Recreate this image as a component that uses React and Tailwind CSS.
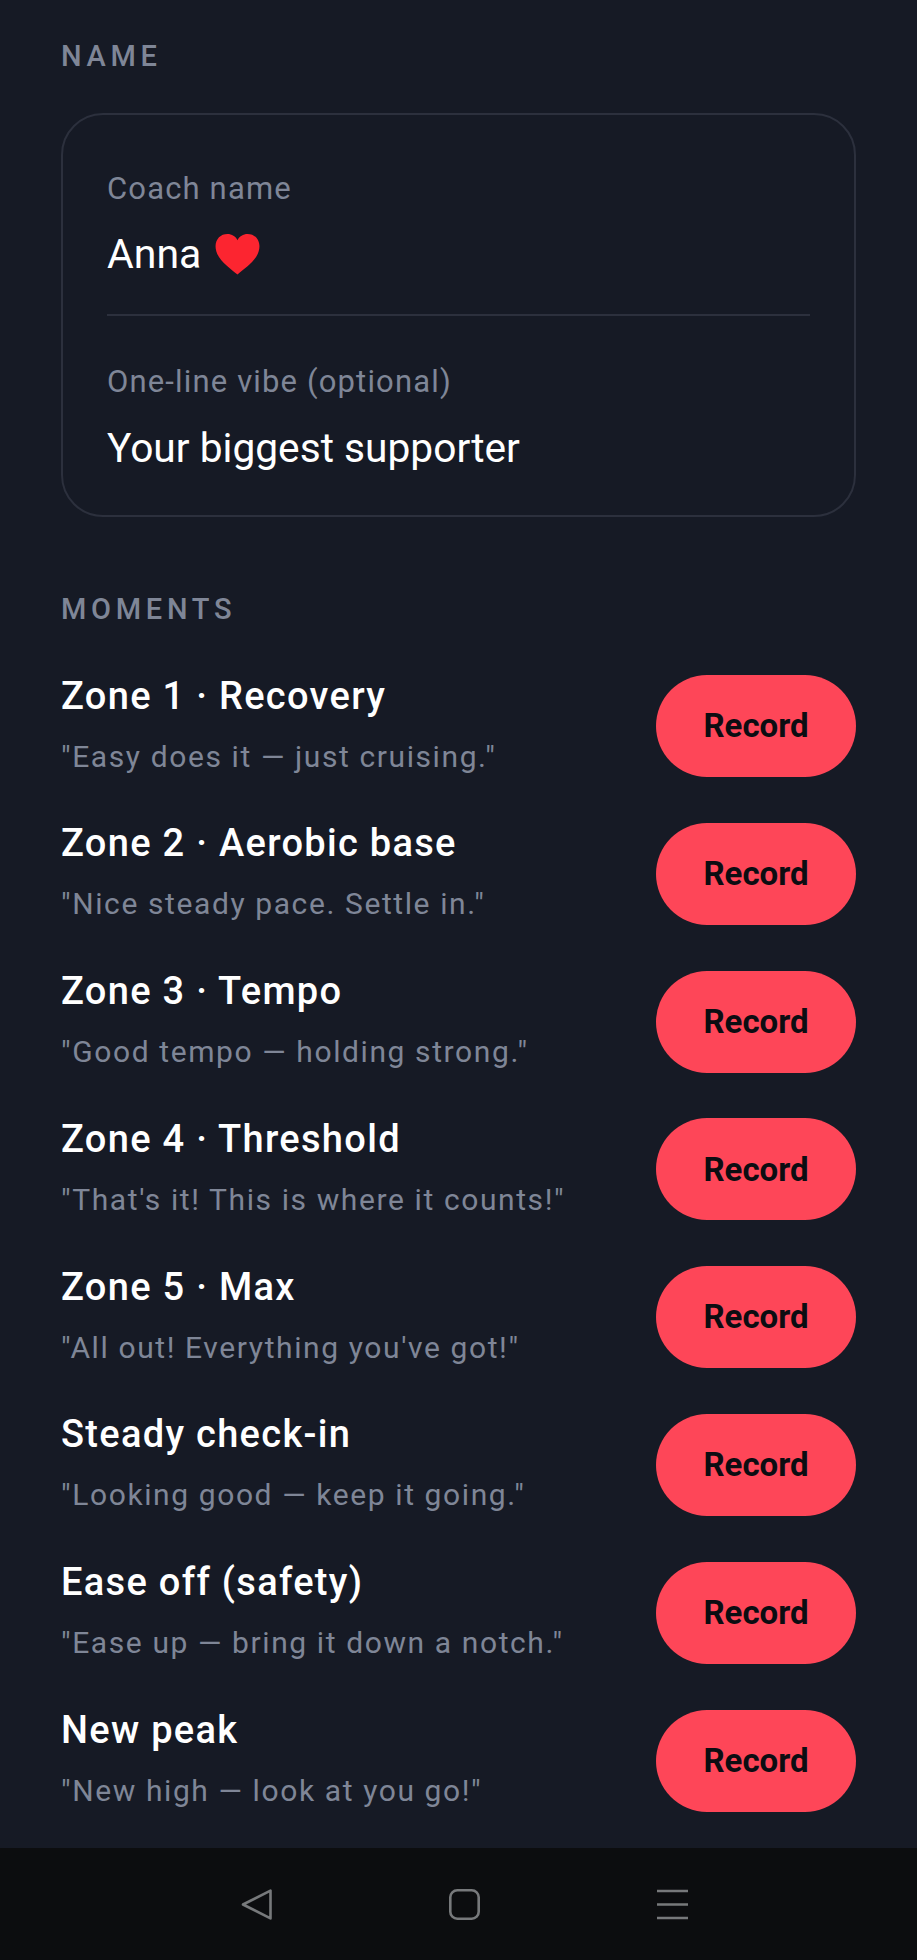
const moments = [
  ["Zone 1 · Recovery", '"Easy does it — just cruising."'],
  ["Zone 2 · Aerobic base", '"Nice steady pace. Settle in."'],
  ["Zone 3 · Tempo", '"Good tempo — holding strong."'],
  ["Zone 4 · Threshold", '"That\'s it! This is where it counts!"'],
  ["Zone 5 · Max", '"All out! Everything you\'ve got!"'],
  ["Steady check-in", '"Looking good — keep it going."'],
  ["Ease off (safety)", '"Ease up — bring it down a notch."'],
  ["New peak", '"New high — look at you go!"'],
];

function Heart() {
  return (
    <svg viewBox="0 0 48 44" className="ml-[13px] h-[42px] w-[47px]">
      <path
        d="M24 43.5C15 36 1 27 1 14C1 6 6.500 1 13.500 1C18 1 22 3.500 24 7.500C26 3.500 30 1 34.500 1C41.500 1 47 6 47 14C47 27 33 36 24 43.500Z"
        fill="#fc2530"
      />
    </svg>
  );
}

function NavBar() {
  return (
    <div className="mt-auto flex h-[112px] items-center justify-between bg-[#0c0d0f] pl-[241px] pr-[229px]">
      <svg width="31" height="31" viewBox="0 0 31 31" fill="none" stroke="#77797b" strokeWidth="2.6" strokeLinejoin="round">
        <path d="M2 15.5L29.5 1.6V29.4Z" />
      </svg>
      <svg width="31" height="31" viewBox="0 0 31 31" fill="none" stroke="#77797b" strokeWidth="2.6">
        <rect x="1.3" y="1.3" width="28.4" height="28.4" rx="7" />
      </svg>
      <svg width="31" height="31" viewBox="0 0 31 31" fill="none" stroke="#77797b" strokeWidth="2.6">
        <path d="M0 2H31M0 15.5H31M0 29H31" />
      </svg>
    </div>
  );
}

export default function App() {
  return (
    <div className="flex h-[1960px] w-[917px] flex-col overflow-hidden bg-[#161a25] font-['Roboto',sans-serif]">
      <div className="px-[61px] pt-[38px]">
        <h2 className="text-[29px] leading-[36px] font-medium tracking-[4.7px] text-[#7f8697]">NAME</h2>

        <div className="mt-[39px] rounded-[42px] border-2 border-[#2c303d] px-[44px] pt-[54px] pb-[42px]">
          <p className="text-[31px] leading-[40px] tracking-[1.15px] text-[#7f8697]">Coach name</p>
          <div className="mt-[20px] flex h-[50px] items-center text-[41px] leading-[50px] text-white">
            Anna
            <Heart />
          </div>
          <div className="mt-[35px] h-[2px] bg-[#2c303d]" />
          <p className="mt-[46px] text-[31px] leading-[40px] tracking-[1.15px] text-[#7f8697]">One-line vibe (optional)</p>
          <p className="mt-[21px] text-[40.7px] leading-[50px] text-white">Your biggest supporter</p>
        </div>

        <h2 className="mt-[74px] text-[29px] leading-[36px] font-medium tracking-[4.7px] text-[#7f8697]">MOMENTS</h2>

        <div className="mt-[48px] flex flex-col gap-[45.8px]">
          {moments.map(([title, quote]) => (
            <div key={title} className="flex h-[102px] items-center justify-between">
              <div className="pb-[3px]">
                <p className="text-[38px] leading-[46px] font-medium tracking-[1.3px] text-white">{title}</p>
                <p className="mt-[18px] text-[30px] leading-[40px] tracking-[1.6px] text-[#7f8697]">{quote}</p>
              </div>
              <button className="h-[102px] w-[200px] rounded-full bg-[#fe4658] text-[33px] font-bold text-[#0c0d12]">
                Record
              </button>
            </div>
          ))}
        </div>
      </div>
      <NavBar />
    </div>
  );
}
